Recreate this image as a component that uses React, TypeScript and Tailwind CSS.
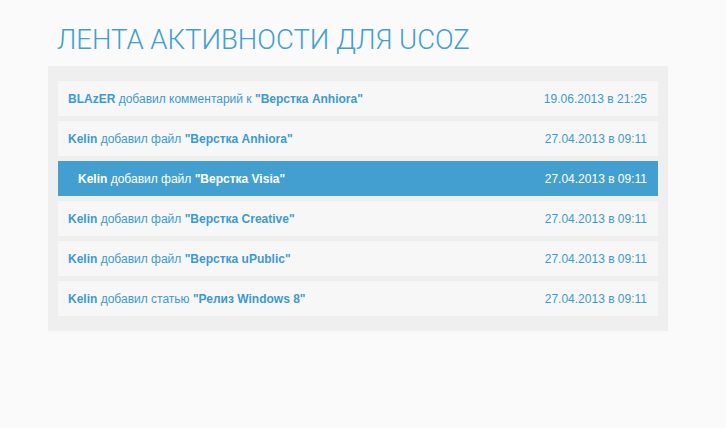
import React from 'react';

type Item = { user: string; action: string; title: string; date: string; active?: boolean };

const items: Item[] = [
  { user: 'BLAzER', action: 'добавил комментарий к', title: '"Верстка Anhiora"', date: '19.06.2013 в 21:25' },
  { user: 'Kelin', action: 'добавил файл', title: '"Верстка Anhiora"', date: '27.04.2013 в 09:11' },
  { user: 'Kelin', action: 'добавил файл', title: '"Верстка Visia"', date: '27.04.2013 в 09:11', active: true },
  { user: 'Kelin', action: 'добавил файл', title: '"Верстка Creative"', date: '27.04.2013 в 09:11' },
  { user: 'Kelin', action: 'добавил файл', title: '"Верстка uPublic"', date: '27.04.2013 в 09:11' },
  { user: 'Kelin', action: 'добавил статью', title: '"Релиз Windows 8"', date: '27.04.2013 в 09:11' },
];

export default function App() {
  return (
    <div className="min-h-screen bg-[#fafafa] pt-[22px] pl-[48px] font-['Liberation_Sans',Arial,sans-serif]">
      <h1 className="pl-[9px] font-['Roboto',sans-serif] font-light text-[27.5px] leading-[36px] text-[#429fd2]">
        ЛЕНТА АКТИВНОСТИ ДЛЯ UCOZ
      </h1>
      <div className="mt-[8px] w-[620px] bg-[#efefef] px-[10px] py-[15px] flex flex-col gap-[5px]">
        {items.map((it, i) => (
          <div
            key={i}
            className={
              it.active
                ? 'h-[35px] flex items-center justify-between bg-[#439fd0] pl-[20px] pr-[11px] text-[12px] text-white'
                : 'h-[35px] flex items-center justify-between bg-[#f7f7f7] pl-[10px] pr-[11px] text-[12px] text-[#3d9ad0]'
            }
          >
            <span>
              <b>{it.user}</b> {it.action} <b>{it.title}</b>
            </span>
            <span>{it.date}</span>
          </div>
        ))}
      </div>
    </div>
  );
}
